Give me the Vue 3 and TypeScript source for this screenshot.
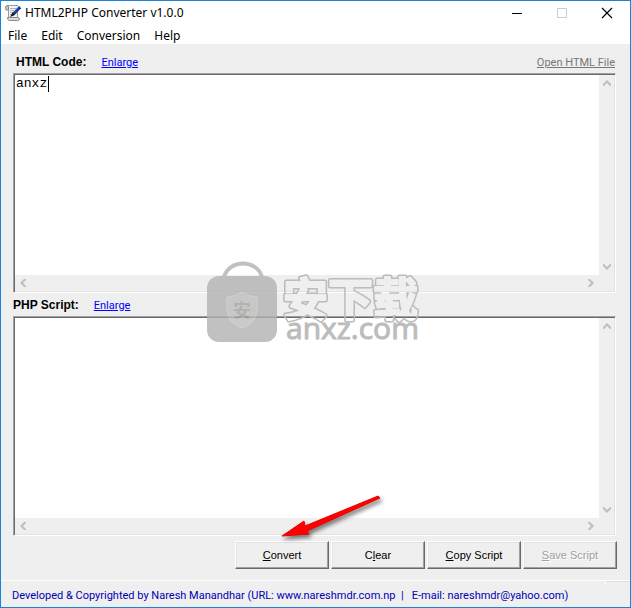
<script setup lang="ts">
import { ref } from 'vue'

interface Editor {
  id: string
  label: string
  text: string
  canOpen: boolean
}
interface Action {
  before: string
  key: string
  after: string
  disabled: boolean
}

const menus: string[] = ['File', 'Edit', 'Conversion', 'Help']
const editors = ref<Editor[]>([
  { id: 'html', label: 'HTML Code:', text: 'anxz', canOpen: true },
  { id: 'php', label: 'PHP Script:', text: '', canOpen: false },
])
const actions: Action[] = [
  { before: '', key: 'C', after: 'onvert', disabled: false },
  { before: 'C', key: 'l', after: 'ear', disabled: false },
  { before: '', key: 'C', after: 'opy Script', disabled: false },
  { before: '', key: 'S', after: 'ave Script', disabled: true },
]
</script>

<template>
  <div class="window">
    <header class="titlebar">
      <svg class="app-icon" viewBox="0 0 16 16" aria-hidden="true">
        <path d="M1 .5H13V13H3.500V5H1L0 3z" fill="#f4f4f4" />
        <path d="M2 .5H13M3.500 5V13M12.500 7V13" stroke="#999" />
        <path d="M.5 1.500Q1.500 0 3.500 1.500V5H1z" fill="#ccc" stroke="#888" />
        <path d="M2.500 12.500h10q2 0 2 1.500t-2 1.500H4.500q-2 0-2-3z" fill="#ddd" stroke="#888" />
        <path d="M5 3.500h6M5 5.500h4M5 7.500h3M5 9.500h2" stroke="#b4b4b4" />
        <path d="M15 2L8.500 9" stroke="#123090" stroke-width="3" />
        <path d="M14.500 1.500L9 7.500" stroke="#2f6ae0" />
        <path d="M7.500 7.500L5 12 10 10z" fill="#111" />
      </svg>
      <h1>HTML2PHP Converter v1.0.0</h1>
      <button class="caption" aria-label="Minimize">
        <svg viewBox="0 0 10 10"><path d="M0 5.500H10" stroke="#000" /></svg>
      </button>
      <button class="caption" aria-label="Maximize" disabled>
        <svg viewBox="0 0 10 10"><path d="M.5 .5h9v9h-9z" fill="none" stroke="#ccc" /></svg>
      </button>
      <button class="caption" aria-label="Close">
        <svg viewBox="0 0 10 10"><path d="M0 0L10 10M10 0L0 10" stroke="#000" stroke-width="1.200" /></svg>
      </button>
    </header>

    <nav class="menubar">
      <button v-for="menu in menus" :key="menu">{{ menu }}</button>
    </nav>

    <main>
      <section v-for="editor in editors" :key="editor.id" class="editor" :class="editor.id">
        <div class="heading">
          <label :for="editor.id">{{ editor.label }}</label>
          <a href="#enlarge">Enlarge</a>
          <a v-if="editor.canOpen" class="open" href="#open">Open HTML File</a>
        </div>
        <div class="field">
          <textarea :id="editor.id" v-model="editor.text" spellcheck="false" wrap="off"></textarea>
          <i v-if="editor.text" class="cursor"></i>
          <div class="bar vertical">
            <svg viewBox="0 0 8 8"><path d="M0 6V4L4 0 8 4V6H7L4 3 1 6z" /></svg>
            <svg viewBox="0 0 8 8"><path d="M0 2V4L4 8 8 4V2H7L4 5 1 2z" /></svg>
          </div>
          <div class="bar horizontal">
            <svg viewBox="0 0 8 8"><path d="M6 0H4L0 4 4 8H6V7L3 4 6 1z" /></svg>
            <svg viewBox="0 0 8 8"><path d="M2 0H4L8 4 4 8H2V7L5 4 2 1z" /></svg>
          </div>
        </div>
      </section>

      <div class="actions">
        <button v-for="action in actions" :key="action.after" :disabled="action.disabled">
          <span>{{ action.before }}<u>{{ action.key }}</u>{{ action.after }}</span>
        </button>
      </div>
    </main>

    <footer>
      <span>Developed &amp; Copyrighted by Naresh Manandhar (URL: www.nareshmdr.com.np&nbsp; |&nbsp;&nbsp; E-mail: nareshmdr@yahoo.com)</span>
      <i class="notch"></i>
    </footer>

    <svg class="watermark" viewBox="0 0 220 90" aria-hidden="true">
      <defs>
        <mask id="outline" maskUnits="userSpaceOnUse" x="0" y="0" width="220" height="90">
          <text class="hanzi halo" x="79" y="57">安下载</text>
          <text class="hanzi core" x="79" y="57">安下载</text>
        </mask>
      </defs>
      <g opacity=".8">
        <path d="M20 18C25 0 53 0 58 18" fill="none" stroke="#b2b2b2" stroke-width="4" />
        <rect x="3" y="17" width="70" height="66" rx="12" fill="#b2b2b2" />
        <path d="M38 33q7 5 15 5v13q0 12-15 18Q23 63 23 51V38q8 0 15-5z" fill="#bebebc" stroke="#cacac7" stroke-width="1" />
        <text class="seal" x="29" y="58">安</text>
      </g>
      <rect width="220" height="90" fill="#bcbcbc" mask="url(#outline)" />
      <text class="domain" x="82" y="80">anxz.com</text>
    </svg>

    <svg class="pointer" viewBox="0 0 110 52" aria-hidden="true">
      <path d="M7 46L29 31 30 36 103 6 105 8 32 41 34 44z" fill="#f00" stroke="#e80000" stroke-width="1" stroke-linejoin="round" />
    </svg>
  </div>
</template>

<style>
body {
  background: #efefef;
}
</style>

<style scoped>
* {
  box-sizing: border-box;
}
.window {
  position: relative;
  display: flex;
  flex-direction: column;
  min-height: 100vh;
  border: 1px solid #1883d7;
  background: #efefef;
  color: #000;
  font: 11px/14px Roboto, sans-serif;
}
button {
  margin: 0;
  border: 0;
  background: none;
  color: inherit;
  font: inherit;
}
.titlebar {
  display: flex;
  align-items: center;
  height: 24px;
  padding: 0 1px 0 4px;
  background: #fff;
}
.app-icon {
  width: 16px;
  height: 16px;
}
h1 {
  flex: 1;
  margin: 0 0 0 4px;
  font: 12px/16px "Noto Sans", sans-serif;
}
.caption {
  width: 45px;
  height: 24px;
  padding: 0;
}
.caption svg {
  display: block;
  width: 10px;
  height: 10px;
  margin: 0 auto;
  overflow: visible;
}
.menubar {
  display: flex;
  height: 19px;
  background: #fff;
  font: 12px/16px "Noto Sans", sans-serif;
}
.menubar button {
  padding: 2px 7px 0;
}
main {
  display: flex;
  flex: 1;
  flex-direction: column;
  padding: 8px 14px 11px 12px;
}
.editor {
  display: flex;
  flex: 1;
  flex-direction: column;
}
.heading {
  display: flex;
  align-items: center;
  height: 21px;
  padding: 0 1px 1px 3px;
}
.php .heading {
  height: 23px;
  padding: 0 1px 0 0;
}
label {
  margin-right: 15px;
  font: bold 12px/16px "Liberation Sans", sans-serif;
}
a {
  padding-top: 2px;
  color: #00f;
  text-decoration: underline;
}
.open {
  margin-left: auto;
  color: #777;
}
.field {
  position: relative;
  display: grid;
  flex: 1;
  grid-template: 1fr 16px / 1fr 15px;
  padding: 1px;
  border: 1px solid;
  border-color: #a0a0a0 #fff #fff #a0a0a0;
  box-shadow: inset 1px 1px #696969, inset -1px -1px #e3e3e3;
}
textarea {
  width: 100%;
  height: 100%;
  padding: 1px;
  border: 0;
  outline: 0;
  overflow: hidden;
  resize: none;
  background: #fff;
  color: #000;
  font: 13px/16px "Liberation Mono", monospace;
}
.cursor {
  position: absolute;
  top: 2px;
  left: 34px;
  width: 1px;
  height: 16px;
  background: #000;
}
.bar {
  display: flex;
  justify-content: space-between;
  align-items: center;
}
.bar svg {
  width: 8px;
  height: 8px;
  fill: #bfbfbf;
}
.vertical {
  flex-direction: column;
  padding: 5px 0;
}
.horizontal {
  padding: 0 5px;
}
.actions {
  display: flex;
  justify-content: flex-end;
  gap: 2px;
  margin: 5px -1px 0 0;
}
.actions button {
  width: 94px;
  height: 28px;
  padding: 0;
  border: 1px solid;
  border-color: #fff #696969 #696969 #fff;
  box-shadow: inset -1px -1px #a0a0a0, inset 1px 1px #e3e3e3;
  font: 11px/14px "Liberation Sans", sans-serif;
}
.actions button:disabled {
  color: #a0a0a0;
  text-shadow: 1px 1px #fff;
}
footer {
  display: flex;
  justify-content: space-between;
  border-top: 1px solid #fff;
  color: #0000b4;
  white-space: nowrap;
}
footer span {
  padding: 8px 0 4px 11px;
}
.notch {
  width: 25px;
  height: 4px;
  border-top: 1px solid #e0e0e0;
  border-left: 1px solid #fff;
}
.watermark {
  position: absolute;
  top: 258px;
  left: 203px;
  width: 220px;
  height: 90px;
  pointer-events: none;
}
.hanzi {
  font: bold 45px "Noto Sans CJK SC", sans-serif;
  stroke-linejoin: round;
}
.halo {
  fill: #fff;
  stroke: #fff;
  stroke-width: 5px;
}
.core {
  fill: #000;
  stroke: #000;
  stroke-width: 2px;
}
.seal {
  fill: #a4a4a4;
  font: bold 18px "Noto Sans CJK SC", sans-serif;
}
.domain {
  fill: #bcbcbc;
  stroke: #bcbcbc;
  stroke-width: 1px;
  font: 30px "Open Sans", sans-serif;
}
.pointer {
  position: absolute;
  top: 489px;
  left: 274px;
  width: 110px;
  height: 52px;
  overflow: visible;
  filter: drop-shadow(2px 3px 2px #0008);
  pointer-events: none;
}
</style>
